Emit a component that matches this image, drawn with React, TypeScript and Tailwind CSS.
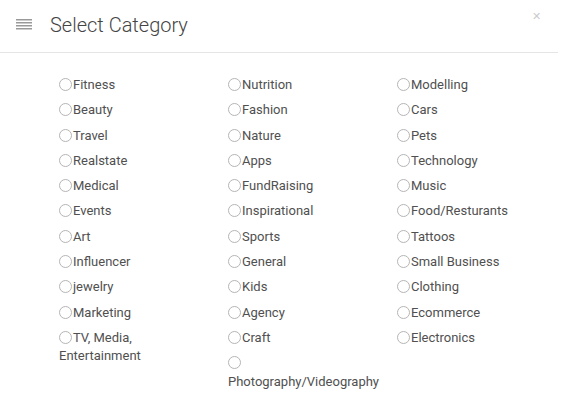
import React from "react";

const cols: string[][] = [
  ["Fitness", "Beauty", "Travel", "Realstate", "Medical", "Events", "Art", "Influencer", "jewelry", "Marketing", "TV, Media, Entertainment"],
  ["Nutrition", "Fashion", "Nature", "Apps", "FundRaising", "Inspirational", "Sports", "General", "Kids", "Agency", "Craft", "Photography/Videography"],
  ["Modelling", "Cars", "Pets", "Technology", "Music", "Food/Resturants", "Tattoos", "Small Business", "Clothing", "Ecommerce", "Electronics"],
];

function Item({ label }: { label: string }) {
  return (
    <div className="mb-[6.7px] text-[13px] leading-[18.6px] text-[#505050]">
      <span className="inline-block w-[13px] h-[13px] rounded-full border border-[#b5b5b5] align-[-2px] mr-px"></span>
      {label}
    </div>
  );
}

export default function App() {
  return (
    <div className="w-[585px] h-[401px] bg-white overflow-hidden" style={{ fontFamily: "Roboto, 'Liberation Sans', sans-serif" }}>
      <div className="w-[558px]">
        <div className="h-[53px] border-b border-[#e5e5e5] flex items-center pl-[16px] relative">
          <svg width="16" height="11" viewBox="0 0 16 11" className="mr-[18px] mt-[-4px]">
            <rect x="0" y="0" width="16" height="1.5" fill="#999" />
            <rect x="0" y="3" width="16" height="1.5" fill="#999" />
            <rect x="0" y="6" width="16" height="1.5" fill="#999" />
            <rect x="0" y="9" width="16" height="1.5" fill="#999" />
          </svg>
          <span className="text-[20px] font-light text-[#444] leading-none mt-[-2px]">Select Category</span>
          <span className="absolute right-[17px] top-[11px] text-[11px] text-[#cccccc] leading-none">✕</span>
        </div>
        <div className="grid grid-cols-[169px_169px_169px] pl-[59px] pt-[23px]">
          {cols.map((c, i) => (
            <div key={i} className="pr-[20px]">
              {c.map((l) => (
                <Item key={l} label={l} />
              ))}
            </div>
          ))}
        </div>
      </div>
    </div>
  );
}
